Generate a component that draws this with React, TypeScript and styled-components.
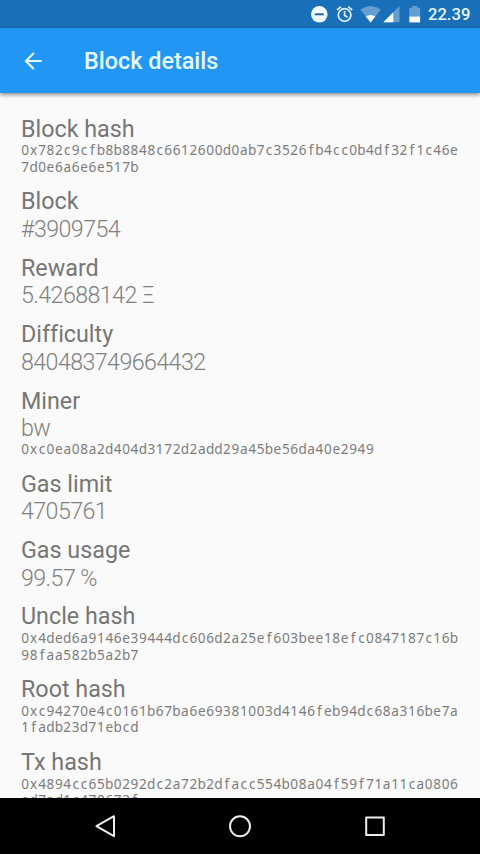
import React from 'react';
import styled, { createGlobalStyle } from 'styled-components';

const GlobalStyle = createGlobalStyle`
  * { box-sizing: border-box; }
  body { margin: 0; background: #fafafa; }
`;

const Screen = styled.div`
  display: flex;
  flex-direction: column;
  width: 480px;
  height: 854px;
  overflow: hidden;
  background: #fafafa;
  font-family: Roboto, sans-serif;
  font-variant-ligatures: none;
`;

const StatusBar = styled.header`
  display: flex;
  flex: none;
  align-items: center;
  justify-content: flex-end;
  height: 28px;
  padding-right: 10px;
  background: #1a6fb9;
  color: #e6f5fd;
`;

const StatusIcons = styled.svg`
  display: block;
  width: 120px;
  height: 28px;
`;

const Clock = styled.span`
  width: 42px;
  font-size: 16.6px;
  font-weight: 500;
  line-height: 28px;
  padding-top: 2px;
  white-space: nowrap;
`;

const AppBar = styled.div`
  display: flex;
  flex: none;
  align-items: center;
  height: 65px;
  padding-left: 20px;
  background: #2196f3;
  box-shadow: 0 2px 4px rgba(0, 0, 0, 0.42);
  z-index: 1;
`;

const BackIcon = styled.svg`
  width: 26px;
  height: 26px;
  fill: #e4fafd;
`;

const Title = styled.h1`
  margin: 1px 0 0 38px;
  color: #e4fafd;
  font-size: 23.4px;
  font-weight: 500;
  line-height: 28px;
`;

const Details = styled.main`
  display: flex;
  flex: 1;
  flex-direction: column;
  gap: 13.3px;
  min-height: 0;
  overflow: hidden;
  padding: 22.6px 21px 0;
`;

const Entry = styled.section`
  flex: none;
`;

const Label = styled.h2`
  margin: 0;
  color: #767676;
  font-size: 23.3px;
  font-weight: 400;
  line-height: 26.8px;
`;

const Value = styled.p`
  margin: 0;
  padding-top: 1.8px;
  color: #808080;
  font-size: 23.2px;
  font-weight: 300;
  letter-spacing: -0.56px;
  line-height: 24.6px;
`;

const Hash = styled.p`
  display: flex;
  flex-wrap: wrap;
  margin: 0;
  color: #7c7c7c;
  font-family: "Noto Sans", sans-serif;
  font-size: 13.6px;
  line-height: 16.3px;
`;

const Cell = styled.span`
  width: 8.41px;
  text-align: center;
`;

const NavBar = styled.nav`
  display: flex;
  flex: none;
  align-items: center;
  justify-content: space-between;
  height: 56px;
  padding: 0 91px;
  background: #000;
`;

const NavIcon = styled.svg`
  width: 28px;
  height: 28px;
  fill: none;
  stroke: #eee;
  stroke-width: 2;
  stroke-linejoin: round;
`;

type Item = { label: string; value?: string; hash?: string };

const items: Item[] = [
  { label: 'Block hash', hash: '0x782c9cfb8b8848c6612600d0ab7c3526fb4cc0b4df32f1c46e7d0e6a6e6e517b' },
  { label: 'Block', value: '#3909754' },
  { label: 'Reward', value: '5.42688142 Ξ' },
  { label: 'Difficulty', value: '840483749664432' },
  { label: 'Miner', value: 'bw', hash: '0xc0ea08a2d404d3172d2add29a45be56da40e2949' },
  { label: 'Gas limit', value: '4705761' },
  { label: 'Gas usage', value: '99.57 %' },
  { label: 'Uncle hash', hash: '0x4ded6a9146e39444dc606d2a25ef603bee18efc0847187c16b98faa582b5a2b7' },
  { label: 'Root hash', hash: '0xc94270e4c0161b67ba6e69381003d4146feb94dc68a316be7a1fadb23d71ebcd' },
  { label: 'Tx hash', hash: '0x4894cc65b0292dc2a72b2dfacc554b08a04f59f71a11ca0806ed7ad1c478672f' },
];

const MonoHash = ({ text }: { text: string }) => (
  <Hash>
    {text.split('').map((char, i) => (
      <Cell key={i}>{char}</Cell>
    ))}
  </Hash>
);

export default function App() {
  return (
    <>
      <GlobalStyle />
      <Screen>
        <StatusBar>
          <StatusIcons viewBox="308 0 120 28">
            <circle cx="319.3" cy="14.3" r="8.3" fill="#effaff" />
            <path d="M314.8 14.3h9" stroke="#35658f" strokeWidth="2" />
            <g fill="none" stroke="#dceffa" strokeWidth="1.7">
              <circle cx="344.6" cy="15" r="6.3" />
              <path d="M344.6 11v4.4l3 1.8M337 10l4-3.3M352.2 10l-4-3.3" />
            </g>
            <path d="M360.3 9.6q10.3-7.4 20.6 0L370.6 22.6z" fill="#639fd1" />
            <path d="M365.8 16.5q4.8-3.2 9.6 0l-4.8 6.1z" fill="#fff" />
            <path d="M383.3 22.3L399.5 6v16.3z" fill="#639fd1" />
            <path d="M383.3 22.3L393.3 12.2v10.1z" fill="#fff" />
            <path d="M409.3 7.8h2.8V6h5.2v1.8h2.8v9.4h-10.8z" fill="#639fd1" />
            <path d="M409.3 16.6h10.8v5.8h-10.8z" fill="#fff" />
          </StatusIcons>
          <Clock>22.39</Clock>
        </StatusBar>
        <AppBar>
          <BackIcon viewBox="0 0 24 24">
            <path d="M20 11H7.83l5.59-5.59L12 4l-8 8 8 8 1.41-1.41L7.83 13H20v-2z" />
          </BackIcon>
          <Title>Block details</Title>
        </AppBar>
        <Details>
          {items.map(({ label, value, hash }) => (
            <Entry key={label}>
              <Label>{label}</Label>
              {value && <Value>{value}</Value>}
              {hash && <MonoHash text={hash} />}
            </Entry>
          ))}
        </Details>
        <NavBar>
          <NavIcon viewBox="0 0 28 28">
            <path d="M5.4 14.2L23 4.2v20z" />
          </NavIcon>
          <NavIcon viewBox="0 0 28 28">
            <circle cx="14" cy="14.3" r="10" />
          </NavIcon>
          <NavIcon viewBox="0 0 28 28">
            <path d="M5.2 5.5h17.6v17.6H5.2z" />
          </NavIcon>
        </NavBar>
      </Screen>
    </>
  );
}
